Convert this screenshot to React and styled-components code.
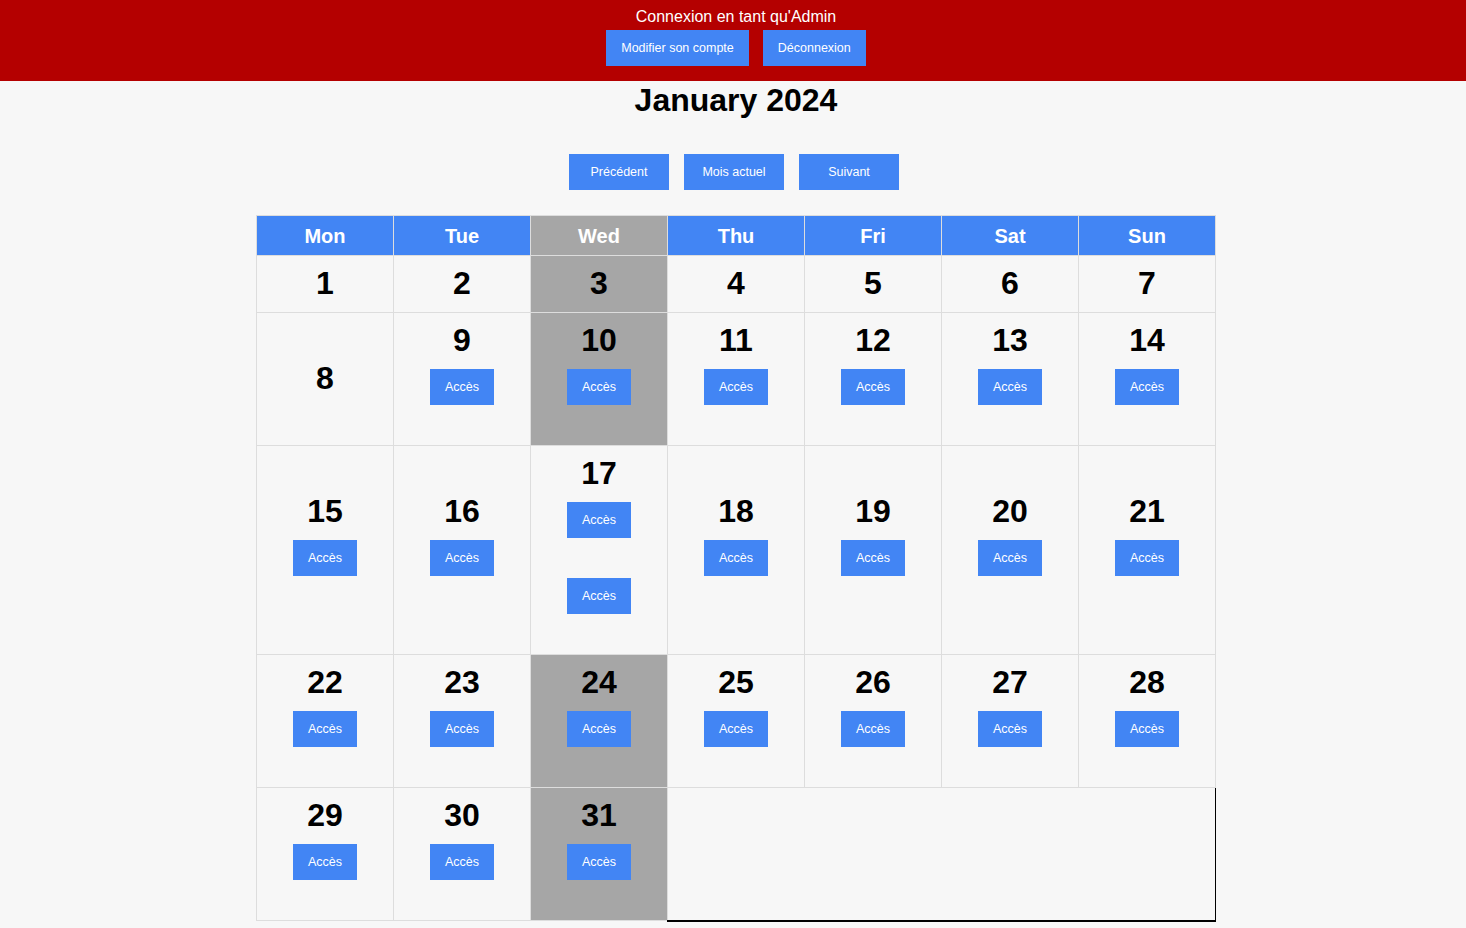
import React from 'react'
import styled, { createGlobalStyle } from 'styled-components'

const GlobalStyle = createGlobalStyle`
  html, body {
    margin: 0;
    padding: 0;
    background: #f7f7f7;
    font-family: 'Liberation Sans', Arial, sans-serif;
  }
`;

const TopBar = styled.header`
  background: #b40000;
  padding: 8px 0 15px 6px;
  display: flex;
  flex-direction: column;
  align-items: center;
`;

const LoggedAs = styled.div`
  color: #fff;
  font-size: 16px;
  line-height: 18px;
  margin-bottom: 4px;
`;

const Main = styled.main`
  padding-left: 6px;
`;

const ButtonRow = styled.div`
  display: flex;
  justify-content: center;
  gap: ${p => p.$gap}px;
`;

const BlueButton = styled.button`
  background: #4285f4;
  color: #fff;
  border: 0;
  outline: none;
  height: 36px;
  padding: 0 15px;
  font-family: 'Liberation Sans', Arial, sans-serif;
  font-size: 12.5px;
  cursor: pointer;
  width: ${p => (p.$width ? p.$width + 'px' : 'auto')};
`;

const MonthTitle = styled.h1`
  margin: 1px 0 0 0;
  text-align: center;
  font-size: 32px;
  font-weight: 700;
  color: #000;
  line-height: 37px;
`;

const NavRow = styled(ButtonRow)`
  margin-top: 35px;
  margin-bottom: 25px;
  padding-right: 4px;
`;

const Calendar = styled.table`
  width: 960px;
  margin: 0 auto;
  border-collapse: collapse;
  table-layout: fixed;
`;

const DayHead = styled.th`
  background: ${p => (p.$today ? '#a6a6a6' : '#4285f4')};
  color: #fff;
  font-size: 20px;
  font-weight: 700;
  line-height: 23px;
  padding: 9px 0 7px 0;
  border: 1px solid #dddddd;
`;

const DayCell = styled.td`
  background: ${p => (p.$today ? '#a6a6a6' : 'transparent')};
  border: 1px solid #dddddd;
  padding: 7px 0 9px 0;
  text-align: center;
  vertical-align: middle;
`;

const EmptyCell = styled.td`
  border-top: 1px solid #dddddd;
  border-left: 1px solid #dddddd;
  border-right: 1px solid #000;
  border-bottom: 2px solid #000;
`;

const DayNumber = styled.div`
  font-size: 32px;
  font-weight: 700;
  line-height: 40px;
  color: #000;
`;

const EventSlot = styled.div`
  padding: 9px 0 31px 0;
`;

const days = ['Mon', 'Tue', 'Wed', 'Thu', 'Fri', 'Sat', 'Sun'];

// [day, number of "Accès" buttons, greyed]
const weeks = [
  [[1, 0, 0], [2, 0, 0], [3, 0, 1], [4, 0, 0], [5, 0, 0], [6, 0, 0], [7, 0, 0]],
  [[8, 0, 0], [9, 1, 0], [10, 1, 1], [11, 1, 0], [12, 1, 0], [13, 1, 0], [14, 1, 0]],
  [[15, 1, 0], [16, 1, 0], [17, 2, 0], [18, 1, 0], [19, 1, 0], [20, 1, 0], [21, 1, 0]],
  [[22, 1, 0], [23, 1, 0], [24, 1, 1], [25, 1, 0], [26, 1, 0], [27, 1, 0], [28, 1, 0]],
  [[29, 1, 0], [30, 1, 0], [31, 1, 1]],
];

const App = () => {
  return (
    <>
      <GlobalStyle />
      <TopBar>
        <LoggedAs>Connexion en tant qu'Admin</LoggedAs>
        <ButtonRow $gap={14}>
          <BlueButton>Modifier son compte</BlueButton>
          <BlueButton>Déconnexion</BlueButton>
        </ButtonRow>
      </TopBar>

      <Main>
        <MonthTitle>January 2024</MonthTitle>

        <NavRow $gap={15}>
          <BlueButton $width={100}>Précédent</BlueButton>
          <BlueButton $width={100}>Mois actuel</BlueButton>
          <BlueButton $width={100}>Suivant</BlueButton>
        </NavRow>

        <Calendar>
          <thead>
            <tr>
              {days.map(d => (
                <DayHead key={d} $today={d === 'Wed'}>{d}</DayHead>
              ))}
            </tr>
          </thead>
          <tbody>
            {weeks.map((week, i) => (
              <tr key={i}>
                {week.map(([n, count, grey]) => (
                  <DayCell key={n} $today={!!grey}>
                    <DayNumber>{n}</DayNumber>
                    {Array.from({ length: count }).map((_, k) => (
                      <EventSlot key={k}>
                        <BlueButton>Accès</BlueButton>
                      </EventSlot>
                    ))}
                  </DayCell>
                ))}
                {week.length < 7 && <EmptyCell colSpan={7 - week.length} />}
              </tr>
            ))}
          </tbody>
        </Calendar>
      </Main>
    </>
  )
}

export default App
